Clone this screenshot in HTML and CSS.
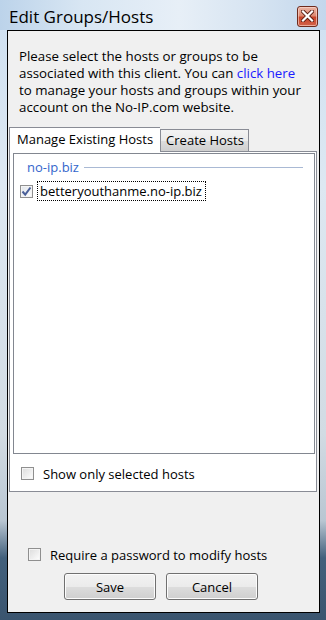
FILE: index.html
```html
<!DOCTYPE html>
<html>
<head>
<meta charset="utf-8">
<link rel="stylesheet" href="styles.css">
</head>
<body>
<div class="window">
  <div class="titlebar">
    <span class="title">Edit Groups/Hosts</span>
    <span class="close">
      <svg width="13" height="12" viewBox="0 0 13 12">
        <path d="M2 1.5 L11 10.5 M11 1.5 L2 10.5" stroke="#5a1e12" stroke-width="4" stroke-linecap="square" fill="none"/>
        <path d="M2 1.5 L11 10.5 M11 1.5 L2 10.5" stroke="#ffffff" stroke-width="2.2" stroke-linecap="square" fill="none"/>
      </svg>
    </span>
  </div>
  <div class="client">
    <p class="intro">Please select the hosts or groups to be<br>associated with this client. You can <a class="link">click here</a><br>to manage your hosts and groups within your<br>account on the No-IP.com website.</p>
    <div class="tabs">
      <div class="tabstrip">
        <div class="tab active">Manage Existing Hosts</div>
        <div class="tab">Create Hosts</div>
      </div>
      <div class="panel">
        <div class="list">
          <div class="group"><span class="group-name">no-ip.biz</span><span class="rule"></span></div>
          <div class="item"><span class="cb checked"><svg width="11" height="11" viewBox="0 0 11 11"><path d="M1.5 5.5 L4.2 8.6 L9.5 1.5" stroke="#4a5f99" stroke-width="2" fill="none"/></svg></span><span class="focus">betteryouthanme.no-ip.biz</span></div>
        </div>
        <div class="opt show"><span class="cb"></span><span>Show only selected hosts</span></div>
      </div>
    </div>
    <div class="opt pw"><span class="cb"></span><span>Require a password to modify hosts</span></div>
    <div class="buttons">
      <button class="btn">Save</button>
      <button class="btn">Cancel</button>
    </div>
  </div>
</div>
</body>
</html>
```

FILE: styles.css
```css
html, body {
  margin: 0;
  padding: 0;
}
body {
  width: 326px;
  height: 620px;
  overflow: hidden;
  font-family: "Open Sans", "Noto Sans", sans-serif;
  font-size: 13px;
  color: #000;
}
.window {
  box-sizing: border-box;
  width: 326px;
  height: 620px;
  padding: 0 6px 7px 7px;
  background: linear-gradient(to bottom, #cfe0f1 0, #dde8f2 30%, #d2dbe3 70%, #b9c6d2 84%, #42607c 90%, #3b556f 100%);
  display: flex;
  flex-direction: column;
}
.titlebar {
  height: 30px;
  flex: none;
  display: flex;
  align-items: center;
  justify-content: space-between;
  margin: 0 -6px 0 -7px;
  padding: 0 8px 0 9px;
  background: linear-gradient(to right, #bcd3ea 0, #d8e6f3 25%, #e7eff7 55%, #d5e3f1 80%, #c3d7ec 100%);
}
.title {
  font-size: 17px;
  line-height: 22px;
  color: #000;
  padding-top: 3px;
}
.close {
  box-sizing: border-box;
  width: 21px;
  height: 21px;
  margin-top: 2px;
  border: 1px solid #6e2b1d;
  border-radius: 3px;
  background: linear-gradient(to bottom, #eab5a5 0, #de8a72 45%, #c9452a 55%, #d2634a 100%);
  box-shadow: inset 0 0 0 1px rgba(255,220,210,0.6);
  display: flex;
  align-items: center;
  justify-content: center;
}
.client {
  flex: 1;
  border: 1px solid #000;
  background: #f0f0f0;
  display: flex;
  flex-direction: column;
  padding-bottom: 12px;
}
.intro {
  margin: 0;
  padding: 17px 4px 0 11px;
  line-height: 17px;
  height: 68px;
  font-size: 13.3px;
  white-space: nowrap;
}
.link {
  color: #1a1aff;
}
.tabs {
  margin: 11px 2px 0 1px;
  display: flex;
  flex-direction: column;
}
.tabstrip {
  display: flex;
  align-items: flex-end;
  height: 24px;
  position: relative;
  z-index: 1;
}
.tab {
  box-sizing: border-box;
  height: 22px;
  padding: 0 4px 0 5px;
  border: 1px solid #898c95;
  border-bottom: none;
  background: linear-gradient(to bottom, #f3f3f3 0, #ebebeb 50%, #dddddd 52%, #cfcfcf 100%);
  line-height: 21px;
  font-size: 13px;
}
.tab.active {
  height: 25px;
  margin-bottom: -1px;
  background: #fff;
  padding: 0 7px 0 7px;
  line-height: 23px;
  border-right: none;
}
.panel {
  box-sizing: border-box;
  height: 341px;
  border: 1px solid #898c95;
  background: #fff;
  padding: 1px 1px 0 3px;
  display: flex;
  flex-direction: column;
}
.list {
  box-sizing: border-box;
  height: 301px;
  border: 1px solid #828790;
  background: #fff;
  display: flex;
  flex-direction: column;
}
.group {
  display: flex;
  align-items: center;
  height: 18px;
  margin: 4px 11px 0 13px;
  gap: 5px;
}
.group-name {
  color: #3366cc;
  line-height: 18px;
}
.rule {
  flex: 1;
  height: 1px;
  background: #a9b9d4;
}
.item {
  display: flex;
  align-items: center;
  height: 20px;
  margin: 5px 0 0 6px;
}
.focus {
  border: 1px dotted #000;
  line-height: 18px;
  padding: 0 3px 0 2px;
  margin-left: 4px;
}
.cb {
  box-sizing: border-box;
  width: 13px;
  height: 13px;
  flex: none;
  border: 1px solid #8f8f8f;
  background: linear-gradient(135deg, #dcdcdc 0, #f0f0f0 60%, #ffffff 100%);
  box-shadow: inset 0 0 0 1px #f4f4f4;
  display: flex;
  align-items: center;
  justify-content: center;
}
.cb.checked {
  background: linear-gradient(135deg, #e0e4ea 0, #f2f4f6 60%, #ffffff 100%);
}
.opt {
  display: flex;
  align-items: center;
  height: 15px;
  gap: 9px;
}
.show {
  margin-top: 12px;
  padding-left: 8px;
}
.pw {
  margin-top: 55px;
  padding-left: 20px;
}
.buttons {
  display: flex;
  gap: 10px;
  margin-top: 11px;
  padding-left: 56px;
}
.btn {
  box-sizing: border-box;
  width: 92px;
  height: 27px;
  border: 1px solid #707070;
  border-radius: 3px;
  background: linear-gradient(to bottom, #f2f2f2 0, #ebebeb 50%, #dddddd 51%, #cfcfcf 100%);
  box-shadow: inset 0 0 0 1px #fcfcfc;
  font-family: "Open Sans", "Noto Sans", sans-serif;
  font-size: 13px;
  color: #000;
  padding: 0;
}
```
